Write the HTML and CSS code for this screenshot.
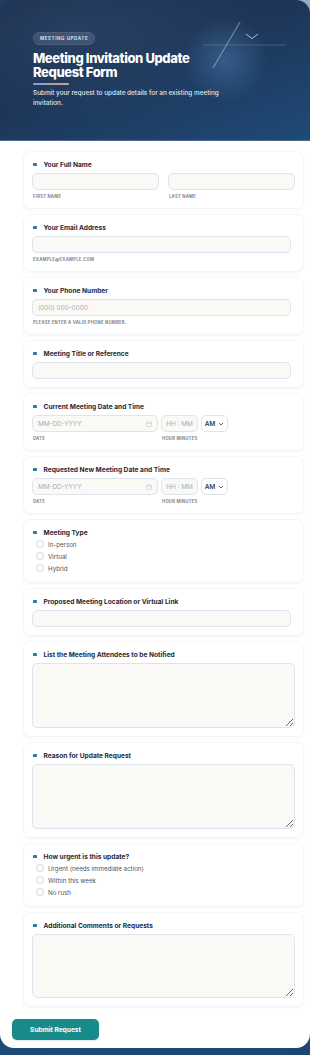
FILE: index.html
```html
<!DOCTYPE html>
<html lang="en">
<head>
<meta charset="utf-8">
<title>Meeting Invitation Update Request Form</title>
<link rel="stylesheet" href="styles.css">
</head>
<body>
<div class="page">
  <header class="hero">
    <svg class="hero-deco" width="310" height="140" viewBox="0 0 310 140" aria-hidden="true">
      <line x1="203" y1="45" x2="286" y2="45" stroke="rgba(255,255,255,0.22)" stroke-width="0.8"/>
      <line x1="240" y1="22" x2="213" y2="68" stroke="rgba(255,255,255,0.35)" stroke-width="1.2"/>
      <polyline points="246,34 252,38.5 258,34" fill="none" stroke="rgba(255,255,255,0.75)" stroke-width="0.9"/>
    </svg>
    <div class="hero-content">
      <span class="badge">MEETING UPDATE</span>
      <h1 class="hero-title">Meeting Invitation Update Request Form</h1>
      <div class="hero-bar"></div>
      <p class="hero-sub">Submit your request to update details for an existing meeting invitation.</p>
    </div>
  </header>

  <form class="form">
    <section class="card">
      <label class="q"><span class="dot"></span>Your Full Name</label>
      <div class="row2">
        <div class="col">
          <input class="field" type="text">
          <span class="sub">First Name</span>
        </div>
        <div class="col">
          <input class="field" type="text">
          <span class="sub">Last Name</span>
        </div>
      </div>
    </section>

    <section class="card">
      <label class="q"><span class="dot"></span>Your Email Address</label>
      <input class="field narrow" type="text">
      <span class="sub">example@example.com</span>
    </section>

    <section class="card">
      <label class="q"><span class="dot"></span>Your Phone Number</label>
      <input class="field narrow" type="text" placeholder="(000) 000-0000">
      <span class="sub">Please enter a valid phone number.</span>
    </section>

    <section class="card">
      <label class="q"><span class="dot"></span>Meeting Title or Reference</label>
      <input class="field narrow" type="text">
    </section>

    <section class="card">
      <label class="q"><span class="dot"></span>Current Meeting Date and Time</label>
      <div class="dt">
        <div class="dt-date">
          <div class="date-wrap">
            <input class="field" type="text" placeholder="MM-DD-YYYY">
            <svg class="cal" width="6" height="6" viewBox="0 0 6 6" aria-hidden="true"><rect x="0.5" y="1" width="5" height="4.5" rx="0.8" fill="none" stroke="#c3c9d2" stroke-width="0.6"/><line x1="0.5" y1="2.4" x2="5.5" y2="2.4" stroke="#c3c9d2" stroke-width="0.6"/></svg>
          </div>
          <span class="sub">Date</span>
        </div>
        <div class="dt-time">
          <div class="time-row">
            <input class="field time" type="text" placeholder="HH : MM">
            <div class="ampm">AM<svg width="6" height="4" viewBox="0 0 6 4" aria-hidden="true"><polyline points="1,1 3,3 5,1" fill="none" stroke="#334155" stroke-width="0.8"/></svg></div>
          </div>
          <span class="sub">Hour Minutes</span>
        </div>
      </div>
    </section>

    <section class="card">
      <label class="q"><span class="dot"></span>Requested New Meeting Date and Time</label>
      <div class="dt">
        <div class="dt-date">
          <div class="date-wrap">
            <input class="field" type="text" placeholder="MM-DD-YYYY">
            <svg class="cal" width="6" height="6" viewBox="0 0 6 6" aria-hidden="true"><rect x="0.5" y="1" width="5" height="4.5" rx="0.8" fill="none" stroke="#c3c9d2" stroke-width="0.6"/><line x1="0.5" y1="2.4" x2="5.5" y2="2.4" stroke="#c3c9d2" stroke-width="0.6"/></svg>
          </div>
          <span class="sub">Date</span>
        </div>
        <div class="dt-time">
          <div class="time-row">
            <input class="field time" type="text" placeholder="HH : MM">
            <div class="ampm">AM<svg width="6" height="4" viewBox="0 0 6 4" aria-hidden="true"><polyline points="1,1 3,3 5,1" fill="none" stroke="#334155" stroke-width="0.8"/></svg></div>
          </div>
          <span class="sub">Hour Minutes</span>
        </div>
      </div>
    </section>

    <section class="card">
      <label class="q"><span class="dot"></span>Meeting Type</label>
      <div class="radios">
        <label class="radio"><input type="radio" name="type">In-person</label>
        <label class="radio"><input type="radio" name="type">Virtual</label>
        <label class="radio"><input type="radio" name="type">Hybrid</label>
      </div>
    </section>

    <section class="card">
      <label class="q"><span class="dot"></span>Proposed Meeting Location or Virtual Link</label>
      <input class="field narrow" type="text">
    </section>

    <section class="card">
      <label class="q"><span class="dot"></span>List the Meeting Attendees to be Notified</label>
      <textarea class="area"></textarea>
    </section>

    <section class="card">
      <label class="q"><span class="dot"></span>Reason for Update Request</label>
      <textarea class="area"></textarea>
    </section>

    <section class="card">
      <label class="q"><span class="dot"></span>How urgent is this update?</label>
      <div class="radios">
        <label class="radio"><input type="radio" name="urg">Urgent (needs immediate action)</label>
        <label class="radio"><input type="radio" name="urg">Within this week</label>
        <label class="radio"><input type="radio" name="urg">No rush</label>
      </div>
    </section>

    <section class="card">
      <label class="q"><span class="dot"></span>Additional Comments or Requests</label>
      <textarea class="area short"></textarea>
    </section>

    <div class="actions">
      <button class="submit" type="button">Submit Request</button>
    </div>
  </form>
</div>
</body>
</html>
```

FILE: styles.css
```css
* { box-sizing: border-box; }

html, body {
  margin: 0;
  padding: 0;
}

body {
  background: linear-gradient(200deg, #9fb0c4 0%, #1e3e66 6%, #1c3a60 60%, #1d4b78 100%);
  font-family: Inter, "Noto Sans", sans-serif;
  color: #1e293b;
  width: 310px;
  min-height: 1055px;
}

.page {
  width: 310px;
}

.hero {
  position: relative;
  height: 141px;
  border-radius: 14px 14px 0 0;
  overflow: hidden;
  background:
    radial-gradient(circle at 226px 60px, rgba(80,130,185,0.45) 0, rgba(80,130,185,0.0) 42px),
    radial-gradient(ellipse at 25% 20%, rgba(60,90,130,0.35) 0, rgba(60,90,130,0) 60%),
    linear-gradient(160deg, #1a2c48 0%, #1d3658 45%, #1f4a77 100%);
  border-bottom: 1px solid #51698a;
}

.hero-deco {
  position: absolute;
  left: 0;
  top: 0;
}

.hero-content {
  position: relative;
  padding: 32px 0 0 33px;
  max-width: 236px;
  display: flex;
  flex-direction: column;
  align-items: flex-start;
}

.badge {
  display: block;
  height: 13px;
  line-height: 13px;
  padding: 0 7px;
  border-radius: 7px;
  background: rgba(255,255,255,0.12);
  box-shadow: inset 0 0 0 0.5px rgba(255,255,255,0.12);
  color: #d5dee9;
  font-size: 4.6px;
  font-weight: 700;
  letter-spacing: 0.12em;
}

.hero-title {
  margin: 6px 0 0;
  color: #ffffff;
  font-size: 13px;
  line-height: 14px;
  font-weight: 800;
  letter-spacing: -0.03em;
  max-width: 200px;
}

.hero-bar {
  width: 36px;
  height: 2px;
  margin-top: 4px;
  border-radius: 1px;
  background: linear-gradient(90deg, #6fa3d6, #d99c7c);
}

.hero-sub {
  margin: 3px 0 0;
  color: #dfe7f1;
  font-size: 6.4px;
  line-height: 10px;
  font-weight: 500;
  max-width: 200px;
}

.form {
  background: #ffffff;
  border-radius: 0 0 14px 14px;
  padding: 11px 7px 8px 12px;
  display: flex;
  flex-direction: column;
  gap: 7px;
  height: 907px;
}

.card {
  margin-left: 12px;
  background: #ffffff;
  border-radius: 6px;
  box-shadow: 0 0 0 0.5px #f0f2f5, 0 1px 4px rgba(15, 23, 42, 0.06);
  padding: 8px 8px 8px;
  display: flex;
  flex-direction: column;
}

.q {
  display: flex;
  align-items: center;
  height: 9px;
  font-size: 6.6px;
  font-weight: 700;
  color: #1e293b;
  margin-bottom: 4px;
}

.dot {
  width: 3.5px;
  height: 3.5px;
  border-radius: 0.6px;
  background: #2b7fa6;
  margin: 0 7px 0 1px;
}

.field {
  display: block;
  width: 100%;
  height: 17px;
  border: 0.6px solid #dde4ec;
  border-radius: 5px;
  background: #fbf9f5;
  padding: 0 5px;
  font-family: inherit;
  font-size: 6.4px;
  color: #1e293b;
  outline: none;
}

.field::placeholder {
  color: #a7aeb8;
}

.narrow {
  width: calc(100% - 4px);
}

.sub {
  display: block;
  margin-top: 4px;
  height: 6px;
  line-height: 6px;
  font-size: 4.2px;
  font-weight: 700;
  letter-spacing: 0.06em;
  text-transform: uppercase;
  color: #7d8794;
  padding-left: 1px;
}

.row2 {
  display: flex;
  gap: 9px;
}

.col {
  flex: 1;
  min-width: 0;
}

.dt {
  display: flex;
  gap: 3px;
}

.dt-date {
  width: 126px;
}

.date-wrap {
  position: relative;
}

.cal {
  position: absolute;
  right: 6px;
  top: 5.5px;
}

.time-row {
  display: flex;
  gap: 3px;
}

.time {
  width: 37px;
  text-align: center;
  padding: 0;
}

.ampm {
  width: 27px;
  height: 17px;
  border: 0.6px solid #dde4ec;
  border-radius: 5px;
  background: #ffffff;
  display: flex;
  align-items: center;
  justify-content: center;
  gap: 3px;
  font-size: 6.6px;
  font-weight: 500;
  color: #1e293b;
}

.radios {
  display: flex;
  flex-direction: column;
  margin-top: -3px;
  padding-left: 4px;
}

.radio {
  display: flex;
  align-items: center;
  height: 12px;
  font-size: 6.2px;
  color: #4b5563;
}

.radio input {
  appearance: none;
  -webkit-appearance: none;
  width: 8px;
  height: 8px;
  margin: 0 4px 0 0;
  border: 0.6px solid #cfd7e2;
  border-radius: 50%;
  background: #ffffff;
}

.area {
  display: block;
  width: 100%;
  height: 65px;
  border: 0.6px solid #dde4ec;
  border-radius: 5px;
  background: #fbf9f5;
  font-family: inherit;
  font-size: 6.4px;
  outline: none;
  resize: vertical;
}

.area.short {
  height: 64px;
}

.actions {
  margin-top: 6px;
  display: flex;
}

.submit {
  width: 87px;
  height: 21px;
  border: none;
  border-radius: 5px;
  background: #178b89;
  color: #ffffff;
  font-family: inherit;
  font-size: 6.6px;
  font-weight: 700;
  box-shadow: 0 1px 2px rgba(0,0,0,0.12);
}
```
